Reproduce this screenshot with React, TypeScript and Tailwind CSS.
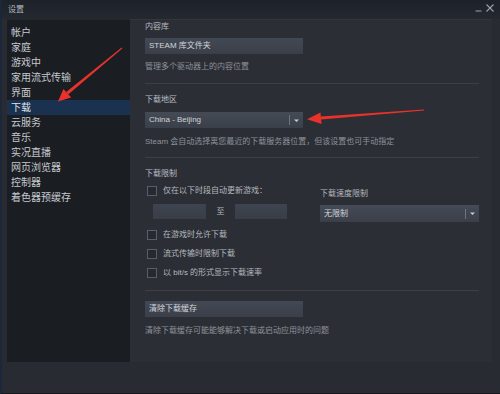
import React from "react";

const items = ["帐户", "家庭", "游戏中", "家用流式传输", "界面", "下载", "云服务", "音乐", "实况直播", "网页浏览器", "控制器", "着色器预缓存"];

function Arrow() {
  return (
    <svg width="7" height="5" viewBox="0 0 7 5" className="block">
      <path d="M1 1.5 L6 1.5 L3.5 4 Z" fill="#c9ccd1" />
    </svg>
  );
}

function Dropdown({ label, w, h }: { label: string; w: string; h: string }) {
  return (
    <div className={`${w} ${h} flex items-center bg-gradient-to-b from-[#454b56] to-[#3a3f49]`}>
      <span className="flex-1 pl-[4px] text-[8px] text-[#d2d5da] leading-none">{label}</span>
      <div className="w-px h-[10px] bg-[#6e747d]" />
      <div className="w-[13px] flex justify-center">
        <Arrow />
      </div>
    </div>
  );
}

function Check({ label, cls }: { label: string; cls: string }) {
  return (
    <div className={`${cls} h-[14px] flex items-center`}>
      <div className="ml-[2px] w-[10px] h-[10px] border border-[#5a5f67] bg-[#26292f]" />
      <span className="ml-[6px] text-[8px] text-[#b5b9bf] leading-none">{label}</span>
    </div>
  );
}

export default function App() {
  return (
    <div className="relative w-[500px] h-[394px] overflow-hidden bg-[#282b31] border-l-2 border-b border-l-[#1c2739] border-b-[#17191d] flex flex-col font-['Liberation_Sans','Noto_Sans_CJK_SC',sans-serif]">
      {/* title bar */}
      <div className="h-[19px] shrink-0 flex items-center justify-between pl-[6px] pr-[6px] bg-gradient-to-b from-[#1d2129] to-[#24282f]">
        <span className="text-[8px] text-[#b4b8be] leading-none">设置</span>
        <div className="flex items-center gap-[4px] -mt-[4px]">
          <svg width="7" height="8" viewBox="0 0 7 8">
            <path d="M0.5 7 H6.5" stroke="#9ea2a9" strokeWidth="1" />
          </svg>
          <svg width="8" height="8" viewBox="0 0 8 8">
            <path d="M0.5 0.5 L7.5 7.5 M7.5 0.5 L0.5 7.5" stroke="#9ea2a9" strokeWidth="1.1" />
          </svg>
        </div>
      </div>

      <div className="h-[343px] shrink-0 flex ml-[5px] mr-[8px]">
        {/* sidebar */}
        <div className="w-[123px] bg-[#1a1d22] border-t border-[#23272e] pt-[5px] flex flex-col">
          {items.map((t) => (
            <div
              key={t}
              className={`h-[15px] pl-[4px] flex items-center text-[10px] leading-none ${
                t === "下载" ? "bg-[#1b3150] text-[#dfe3e8]" : "text-[#c5c9cf]"
              }`}
            >
              {t}
            </div>
          ))}
        </div>

        {/* content */}
        <div className="flex-1 bg-[#2b2e35] border-t border-[#31353c] pl-[15px] pr-[13px] flex flex-col">
          <div className="mt-[0px] h-[14px] flex items-center text-[8px] text-[#b9bdc3] leading-none">内容库</div>
          <div className="mt-[4px] w-[158px] h-[16px] flex items-center pl-[4px] bg-gradient-to-b from-[#434954] to-[#3a3f49] text-[8px] text-[#d2d5da] leading-none">
            STEAM 库文件夹
          </div>
          <div className="mt-[6px] h-[14px] flex items-center text-[8px] text-[#8e939a] leading-none">管理多个驱动器上的内容位置</div>
          <div className="mt-[9px] h-px bg-[#3b3f46]" />

          <div className="mt-[9px] h-[14px] flex items-center text-[8px] text-[#b9bdc3] leading-none">下载地区</div>
          <div className="mt-[5px]">
            <Dropdown label="China - Beijing" w="w-[158px]" h="h-[16px]" />
          </div>
          <div className="mt-[7px] h-[14px] flex items-center text-[8px] text-[#8e939a] leading-none">
            Steam 会自动选择离您最近的下载服务器位置，但该设置也可手动指定
          </div>
          <div className="mt-[8px] h-px bg-[#3b3f46]" />

          <div className="mt-[9px] h-[14px] flex items-center text-[8px] text-[#b9bdc3] leading-none">下载限制</div>
          <div className="mt-[3px] flex">
            <div className="w-[175px] flex flex-col">
              <Check label="仅在以下时段自动更新游戏：" cls="" />
              <div className="mt-[6px] flex items-center">
                <div className="ml-[8px] w-[53px] h-[15px] bg-gradient-to-b from-[#3f4550] to-[#383d47]" />
                <span className="w-[29px] text-center text-[8px] text-[#b5b9bf] leading-none">至</span>
                <div className="w-[52px] h-[15px] bg-gradient-to-b from-[#3f4550] to-[#383d47]" />
              </div>
            </div>
            <div className="w-[159px] flex flex-col">
              <div className="mt-[3px] h-[14px] flex items-center text-[8px] text-[#b5b9bf] leading-none">下载速度限制</div>
              <div className="mt-[4px]">
                <Dropdown label="无限制" w="w-[159px]" h="h-[17px]" />
              </div>
            </div>
          </div>
          <Check label="在游戏时允许下载" cls="mt-[6px]" />
          <Check label="流式传输时限制下载" cls="mt-[5px]" />
          <Check label="以 bit/s 的形式显示下载速率" cls="mt-[5px]" />
          <div className="mt-[10px] h-px bg-[#3b3f46]" />
          <div className="mt-[10px] w-[158px] h-[16px] flex items-center pl-[4px] bg-gradient-to-b from-[#434954] to-[#3a3f49] text-[8px] text-[#d2d5da] leading-none">
            清除下载缓存
          </div>
          <div className="mt-[7px] h-[14px] flex items-center text-[8px] text-[#8e939a] leading-none">
            清除下载缓存可能能够解决下载或启动应用时的问题
          </div>
        </div>
      </div>

      <div className="flex-1 bg-[#282b31]" />

      {/* red annotation arrows */}
      <svg className="absolute left-[-2px] top-0 pointer-events-none" width="500" height="394" viewBox="0 0 500 394">
        <polygon points="122.3,48.4 121.7,47.6 66.2,92.1 68.2,94.5" fill="#e8322b" />
        <polygon points="71.2,97.6 63.4,88.9 58,101.5" fill="#e8322b" />
        <polygon points="424,110.5 424,109.5 320.9,116.4 321.1,119.4" fill="#e8322b" />
        <polygon points="321.6,124 320.5,112.6 307,119.2" fill="#e8322b" />
      </svg>
    </div>
  );
}
